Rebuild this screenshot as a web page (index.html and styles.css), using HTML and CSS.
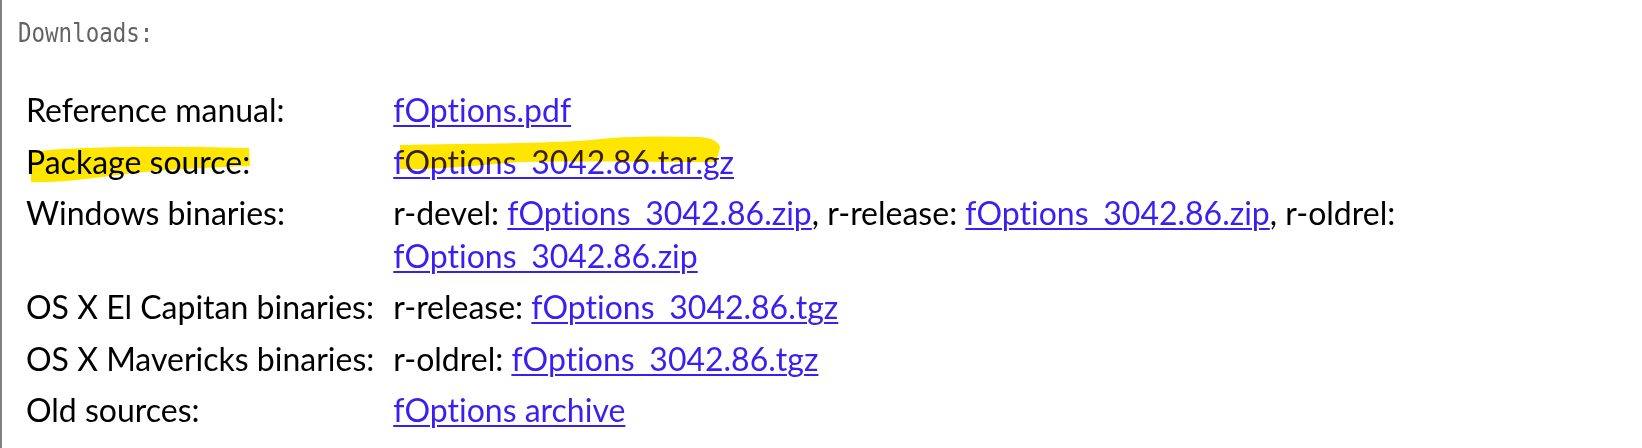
FILE: index.html
```html
<!DOCTYPE html>
<html>
<head>
<meta charset="utf-8">
<link rel="stylesheet" href="styles.css">
</head>
<body>
<div class="frame">
  <div class="heading">Downloads:</div>
  <table class="downloads">
    <tr><td class="label">Reference manual:</td><td><a href="#">fOptions.pdf</a></td></tr>
    <tr><td class="label">Package source:</td><td><a href="#">fOptions_3042.86.tar.gz</a></td></tr>
    <tr><td class="label">Windows binaries:</td><td>r-devel: <a href="#">fOptions_3042.86.zip</a>, r-release: <a href="#">fOptions_3042.86.zip</a>, r-oldrel: <a href="#">fOptions_3042.86.zip</a></td></tr>
    <tr><td class="label">OS X El Capitan binaries:</td><td>r-release: <a href="#">fOptions_3042.86.tgz</a></td></tr>
    <tr><td class="label">OS X Mavericks binaries:</td><td>r-oldrel: <a href="#">fOptions_3042.86.tgz</a></td></tr>
    <tr><td class="label">Old sources:</td><td><a href="#">fOptions archive</a></td></tr>
  </table>
  <svg class="marker" width="1642" height="448" viewBox="0 0 1642 448">
    <path d="M30 152 C 80 146, 160 146, 249 148 L 250 166 C 200 168, 150 170, 110 176 C 80 180, 50 183, 31 182 Z" fill="#ffe600"/>
    <path d="M400 145 C 470 143, 540 144, 590 140 C 620 136, 660 136, 700 137 C 712 138, 720 142, 720 148 L 716 162 C 650 162, 580 161, 520 162 C 470 166, 430 170, 400 169 Z" fill="#ffe600"/>
  </svg>
</div>
</body>
</html>
```

FILE: styles.css
```css
html, body {
  margin: 0;
  padding: 0;
  background: #ffffff;
}
.frame {
  position: relative;
  height: 448px;
  box-sizing: border-box;
  border-left: 2px solid #808080;
  padding: 16px 0 0 16px;
}
.heading {
  font-family: "DejaVu Sans Mono", monospace;
  font-size: 26px;
  color: #636363;
  transform: scaleX(0.865);
  transform-origin: left center;
  line-height: 34px;
}
.downloads {
  margin-top: 35px;
  margin-left: 4px;
  border-collapse: separate;
  border-spacing: 0;
  font-family: Lato, sans-serif;
  font-size: 32px;
  font-variant-ligatures: none;
  color: #000000;
}
.downloads td {
  padding: 4px 4px 5px 4px;
  line-height: 42.5px;
  vertical-align: top;
}
.downloads td.label {
  padding-right: 15px;
  white-space: nowrap;
}
.downloads a {
  color: #3a1ff0;
  text-decoration: underline;
  text-decoration-thickness: 2px;
  text-underline-offset: 3px;
}
.marker {
  position: absolute;
  left: -2px;
  top: 0;
  pointer-events: none;
  mix-blend-mode: multiply;
}
```
